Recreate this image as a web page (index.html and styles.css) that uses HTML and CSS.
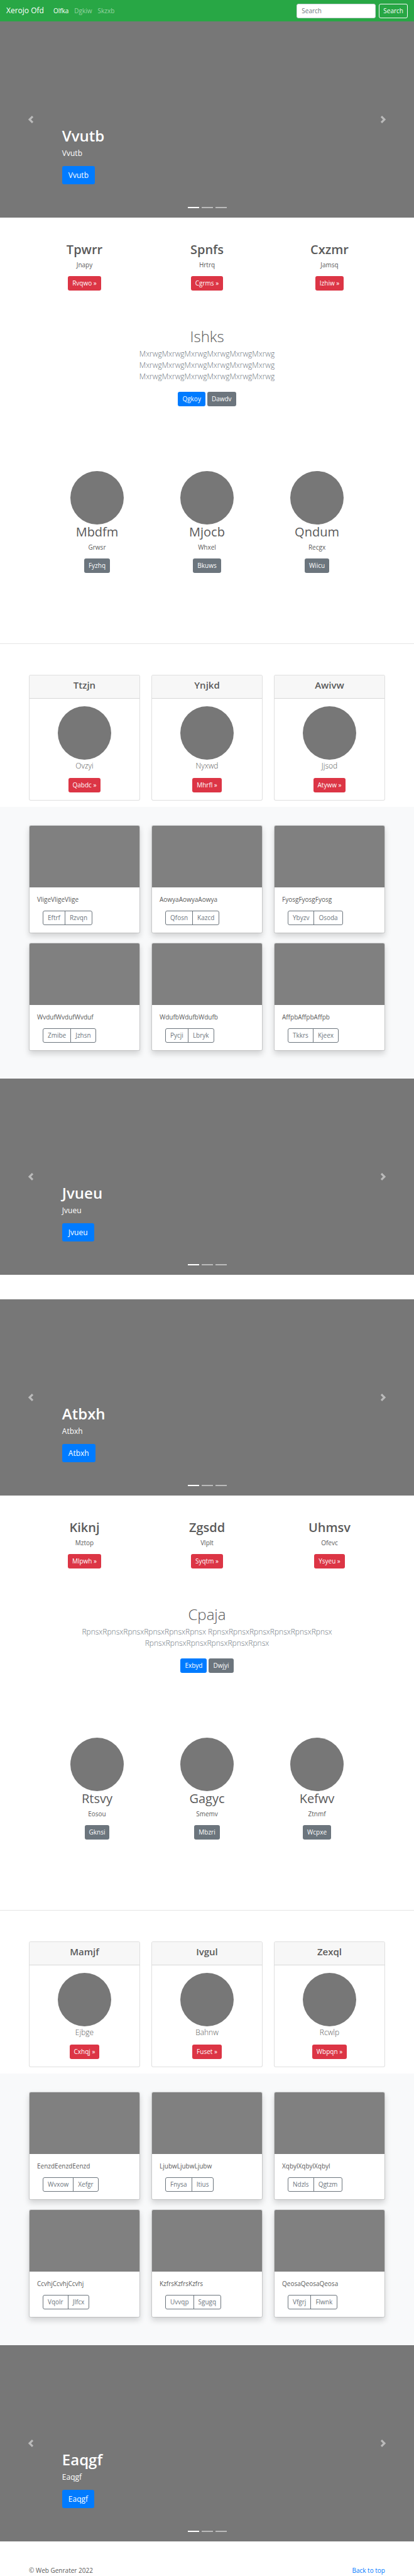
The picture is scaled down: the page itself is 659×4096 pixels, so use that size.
FILE: index.html
```html
<!DOCTYPE html>
<html lang="en">
<head>
<meta charset="utf-8">
<meta name="viewport" content="width=device-width, initial-scale=1">
<title>Xerojo Ofd</title>
<link rel="stylesheet" href="styles.css">
</head>
<body>
<header class="navbar">
  <a class="brand" href="#">Xerojo Ofd</a>
  <nav class="nav-links">
    <a class="nav-link active" href="#">Olfka</a>
    <a class="nav-link" href="#">Dgkiw</a>
    <a class="nav-link" href="#">Skzxb</a>
  </nav>
  <form class="search">
    <input class="search-input" type="text" placeholder="Search" aria-label="Search">
    <button class="btn btn-outline-light" type="button">Search</button>
  </form>
</header>
<main>

<section class="carousel">
  <div class="caption">
    <h1>Vvutb</h1>
    <p>Vvutb</p>
    <a class="btn btn-primary btn-lg" href="#">Vvutb</a>
  </div>
  <button class="control prev" type="button" aria-label="Previous"><svg viewBox="0 0 8 8"><path d="M5.25 0l-4 4 4 4 1.5-1.5L4.25 4l2.5-2.5L5.25 0z"/></svg></button>
  <button class="control next" type="button" aria-label="Next"><svg viewBox="0 0 8 8"><path d="M2.75 0l-1.5 1.5L3.75 4l-2.5 2.5L2.75 8l4-4-4-4z"/></svg></button>
  <div class="indicators"><span class="on"></span><span></span><span></span></div>
</section>

<section class="container columns features">
  <div class="column"><h2>Tpwrr</h2><p>Jnapy</p><a class="btn btn-danger" href="#">Rvqwo »</a></div>
  <div class="column"><h2>Spnfs</h2><p>Hrtrq</p><a class="btn btn-danger" href="#">Cgrms »</a></div>
  <div class="column"><h2>Cxzmr</h2><p>Jamsq</p><a class="btn btn-danger" href="#">Izhiw »</a></div>
</section>

<section class="intro">
  <h1>Ishks</h1>
  <p class="lead">MxrwgMxrwgMxrwgMxrwgMxrwgMxrwg MxrwgMxrwgMxrwgMxrwgMxrwgMxrwg MxrwgMxrwgMxrwgMxrwgMxrwgMxrwg</p>
  <div class="actions"><a class="btn btn-primary" href="#">Qgkoy</a><a class="btn btn-secondary" href="#">Dawdv</a></div>
</section>

<section class="team">
  <div class="column"><div class="avatar"></div><h2>Mbdfm</h2><p>Grwsr</p><a class="btn btn-secondary" href="#">Fyzhq</a></div>
  <div class="column"><div class="avatar"></div><h2>Mjocb</h2><p>Whxel</p><a class="btn btn-secondary" href="#">Bkuws</a></div>
  <div class="column"><div class="avatar"></div><h2>Qndum</h2><p>Recgx</p><a class="btn btn-secondary" href="#">Wiicu</a></div>
</section>

<hr class="divider">

<section class="container columns plans">
  <article class="card plan"><h4>Ttzjn</h4><div class="plan-body"><div class="avatar"></div><p>Ovzyi</p><a class="btn btn-danger" href="#">Qabdc »</a></div></article>
  <article class="card plan"><h4>Ynjkd</h4><div class="plan-body"><div class="avatar"></div><p>Nyxwd</p><a class="btn btn-danger" href="#">Mhrfl »</a></div></article>
  <article class="card plan"><h4>Awivw</h4><div class="plan-body"><div class="avatar"></div><p>Jjsod</p><a class="btn btn-danger" href="#">Atyww »</a></div></article>
</section>

<section class="album">
  <div class="container columns album-grid">
    <article class="card tile"><div class="thumb"></div><div class="tile-body"><p>VligeVligeVlige</p><div class="btn-group"><button type="button">Eftrf</button><button type="button">Rzvqn</button></div></div></article>
    <article class="card tile"><div class="thumb"></div><div class="tile-body"><p>AowyaAowyaAowya</p><div class="btn-group"><button type="button">Qfosn</button><button type="button">Kazcd</button></div></div></article>
    <article class="card tile"><div class="thumb"></div><div class="tile-body"><p>FyosgFyosgFyosg</p><div class="btn-group"><button type="button">Ybyzv</button><button type="button">Osoda</button></div></div></article>
    <article class="card tile"><div class="thumb"></div><div class="tile-body"><p>WvdufWvdufWvduf</p><div class="btn-group"><button type="button">Zmibe</button><button type="button">Jzhsn</button></div></div></article>
    <article class="card tile"><div class="thumb"></div><div class="tile-body"><p>WdufbWdufbWdufb</p><div class="btn-group"><button type="button">Pycji</button><button type="button">Lbryk</button></div></div></article>
    <article class="card tile"><div class="thumb"></div><div class="tile-body"><p>AffpbAffpbAffpb</p><div class="btn-group"><button type="button">Tkkrs</button><button type="button">Kjeex</button></div></div></article>
  </div>
</section>

<section class="carousel">
  <div class="caption">
    <h1>Jvueu</h1>
    <p>Jvueu</p>
    <a class="btn btn-primary btn-lg" href="#">Jvueu</a>
  </div>
  <button class="control prev" type="button" aria-label="Previous"><svg viewBox="0 0 8 8"><path d="M5.25 0l-4 4 4 4 1.5-1.5L4.25 4l2.5-2.5L5.25 0z"/></svg></button>
  <button class="control next" type="button" aria-label="Next"><svg viewBox="0 0 8 8"><path d="M2.75 0l-1.5 1.5L3.75 4l-2.5 2.5L2.75 8l4-4-4-4z"/></svg></button>
  <div class="indicators"><span class="on"></span><span></span><span></span></div>
</section>

<section class="carousel spaced">
  <div class="caption">
    <h1>Atbxh</h1>
    <p>Atbxh</p>
    <a class="btn btn-primary btn-lg" href="#">Atbxh</a>
  </div>
  <button class="control prev" type="button" aria-label="Previous"><svg viewBox="0 0 8 8"><path d="M5.25 0l-4 4 4 4 1.5-1.5L4.25 4l2.5-2.5L5.25 0z"/></svg></button>
  <button class="control next" type="button" aria-label="Next"><svg viewBox="0 0 8 8"><path d="M2.75 0l-1.5 1.5L3.75 4l-2.5 2.5L2.75 8l4-4-4-4z"/></svg></button>
  <div class="indicators"><span class="on"></span><span></span><span></span></div>
</section>

<section class="container columns features">
  <div class="column"><h2>Kiknj</h2><p>Mztop</p><a class="btn btn-danger" href="#">Mlpwh »</a></div>
  <div class="column"><h2>Zgsdd</h2><p>Vlplt</p><a class="btn btn-danger" href="#">Syqtm »</a></div>
  <div class="column"><h2>Uhmsv</h2><p>Ofevc</p><a class="btn btn-danger" href="#">Ysyeu »</a></div>
</section>

<section class="intro">
  <h1>Cpaja</h1>
  <p class="lead">RpnsxRpnsxRpnsxRpnsxRpnsxRpnsx RpnsxRpnsxRpnsxRpnsxRpnsxRpnsx RpnsxRpnsxRpnsxRpnsxRpnsxRpnsx</p>
  <div class="actions"><a class="btn btn-primary" href="#">Exbyd</a><a class="btn btn-secondary" href="#">Dwjyi</a></div>
</section>

<section class="team">
  <div class="column"><div class="avatar"></div><h2>Rtsvy</h2><p>Eosou</p><a class="btn btn-secondary" href="#">Gknsi</a></div>
  <div class="column"><div class="avatar"></div><h2>Gagyc</h2><p>Smemv</p><a class="btn btn-secondary" href="#">Mbzri</a></div>
  <div class="column"><div class="avatar"></div><h2>Kefwv</h2><p>Ztnmf</p><a class="btn btn-secondary" href="#">Wcpxe</a></div>
</section>

<hr class="divider">

<section class="container columns plans">
  <article class="card plan"><h4>Mamjf</h4><div class="plan-body"><div class="avatar"></div><p>Ejbge</p><a class="btn btn-danger" href="#">Cxhqj »</a></div></article>
  <article class="card plan"><h4>Ivgul</h4><div class="plan-body"><div class="avatar"></div><p>Bahnw</p><a class="btn btn-danger" href="#">Fuset »</a></div></article>
  <article class="card plan"><h4>Zexql</h4><div class="plan-body"><div class="avatar"></div><p>Rcwlp</p><a class="btn btn-danger" href="#">Wbpqn »</a></div></article>
</section>

<section class="album">
  <div class="container columns album-grid">
    <article class="card tile"><div class="thumb"></div><div class="tile-body"><p>EenzdEenzdEenzd</p><div class="btn-group"><button type="button">Wvxow</button><button type="button">Xefgr</button></div></div></article>
    <article class="card tile"><div class="thumb"></div><div class="tile-body"><p>LjubwLjubwLjubw</p><div class="btn-group"><button type="button">Fnysa</button><button type="button">Itius</button></div></div></article>
    <article class="card tile"><div class="thumb"></div><div class="tile-body"><p>XqbylXqbylXqbyl</p><div class="btn-group"><button type="button">Ndzls</button><button type="button">Qgtzm</button></div></div></article>
    <article class="card tile"><div class="thumb"></div><div class="tile-body"><p>CcvhjCcvhjCcvhj</p><div class="btn-group"><button type="button">Vqolr</button><button type="button">Jlfcx</button></div></div></article>
    <article class="card tile"><div class="thumb"></div><div class="tile-body"><p>KzfrsKzfrsKzfrs</p><div class="btn-group"><button type="button">Uvvqp</button><button type="button">Sgugq</button></div></div></article>
    <article class="card tile"><div class="thumb"></div><div class="tile-body"><p>QeosaQeosaQeosa</p><div class="btn-group"><button type="button">Vfgrj</button><button type="button">Flwnk</button></div></div></article>
  </div>
</section>

<section class="carousel">
  <div class="caption">
    <h1>Eaqgf</h1>
    <p>Eaqgf</p>
    <a class="btn btn-primary btn-lg" href="#">Eaqgf</a>
  </div>
  <button class="control prev" type="button" aria-label="Previous"><svg viewBox="0 0 8 8"><path d="M5.25 0l-4 4 4 4 1.5-1.5L4.25 4l2.5-2.5L5.25 0z"/></svg></button>
  <button class="control next" type="button" aria-label="Next"><svg viewBox="0 0 8 8"><path d="M2.75 0l-1.5 1.5L3.75 4l-2.5 2.5L2.75 8l4-4-4-4z"/></svg></button>
  <div class="indicators"><span class="on"></span><span></span><span></span></div>
</section>
</main>

<footer class="container footer">
  <span>© Web Genrater 2022</span>
  <a href="#">Back to top</a>
</footer>
</body>
</html>
```
FILE: styles.css
```css
* { box-sizing: border-box; }
body {
  margin: 0;
  background: #fff;
  color: #5a5a5a;
  font-family: "Open Sans", "Noto Sans", sans-serif;
  font-size: 10px;
  line-height: 15px;
}
h1, h2, h4, p { margin: 0; }
a { color: #007bff; text-decoration: none; }
button, input { font: inherit; }

/* Top bar */
.navbar {
  display: flex;
  align-items: center;
  height: 34px;
  padding: 0 10px;
  background: #28a745;
}
.brand { margin-right: 15px; color: #fff; font-size: 12px; line-height: 18px; }
.nav-links { display: flex; flex: 1; gap: 9px; }
.nav-link { color: rgba(255, 255, 255, .5); }
.nav-link.active { color: #fff; }
.search { display: flex; gap: 5px; }
.search-input {
  width: 126px;
  height: 23px;
  padding: 0 7px;
  border: 1px solid #ced4da;
  border-radius: 3px;
  color: #495057;
}
.search-input::placeholder { color: #6c757d; opacity: 1; }

/* Buttons */
.btn {
  display: inline-block;
  height: 23px;
  padding: 3px 6px;
  border: 1px solid transparent;
  border-radius: 3px;
  color: #fff;
  line-height: 15px;
  white-space: nowrap;
}
.btn-primary { background: #007bff; }
.btn-secondary { background: #6c757d; }
.btn-danger { background: #dc3545; }
.btn-outline-light { background: transparent; border-color: #f8f9fa; }
.btn-lg { height: 29px; padding: 4px 9px; font-size: 12px; line-height: 19px; }

/* Carousel */
.carousel {
  position: relative;
  display: flex;
  align-items: flex-end;
  height: 312px;
  padding: 0 15%;
  background: #777;
  color: #fff;
}
.carousel.spaced { margin-top: 39px; }
.caption { padding-bottom: 53px; }
.caption h1 { margin-bottom: 5px; font-size: 24px; font-weight: 600; line-height: 29px; }
.caption p { margin-bottom: 11px; font-size: 12px; line-height: 18px; }
.caption .btn { display: block; width: fit-content; }
.control {
  position: absolute;
  top: 0;
  bottom: 0;
  display: flex;
  align-items: center;
  justify-content: center;
  width: 15%;
  padding: 0;
  border: 0;
  background: none;
  opacity: .5;
}
.prev { left: 0; }
.next { right: 0; }
.control svg { width: 12px; height: 12px; fill: #fff; }
.indicators {
  position: absolute;
  right: 0;
  bottom: 15px;
  left: 0;
  display: flex;
  justify-content: center;
  gap: 4px;
}
.indicators span { width: 18px; height: 2px; background: #fff; opacity: .5; }
.indicators .on { opacity: 1; }

/* Shared columns */
.container { padding: 0 46px; }
.columns { display: grid; grid-template-columns: repeat(3, 1fr); gap: 15px 18px; }
.column { display: flex; flex-direction: column; align-items: center; }
.column h2 { margin-bottom: 5px; font-size: 20px; font-weight: 400; line-height: 24px; }
.column p { margin-bottom: 10px; }
.features { margin-top: 39px; }
.features h2 { font-weight: 600; }
.avatar { width: 85px; height: 85px; border-radius: 50%; background: #777; }

/* Intro */
.intro { max-width: 400px; margin: 58px auto 0; text-align: center; }
.intro h1 { margin-bottom: 5px; font-size: 24px; font-weight: 300; line-height: 29px; }
.lead { color: #6c757d; font-size: 12px; font-weight: 300; line-height: 18px; }
.actions { display: flex; justify-content: center; gap: 3px; margin-top: 15px; }

.team { display: grid; grid-template-columns: repeat(3, 1fr); margin-top: 103px; padding: 0 67px; }
.divider { margin: 112px 0 49px; border: 0; border-top: 1px solid rgba(0, 0, 0, .1); }

/* Cards */
.card { overflow: hidden; border: 1px solid rgba(0, 0, 0, .125); border-radius: 3px; background: #fff; background-clip: padding-box; }
.plan h4 {
  padding: 6px 12px 12px;
  border-bottom: 1px solid rgba(0, 0, 0, .125);
  background: #f7f7f7;
  font-size: 15px;
  font-weight: 600;
  line-height: 18px;
  text-align: center;
}
.plan-body { display: flex; flex-direction: column; align-items: center; padding: 12px; }
.plan-body p { margin: 1px 0 10px; font-size: 12px; font-weight: 300; line-height: 18px; }

.album { margin-top: 10px; padding: 29px 0 44px; background: #f8f9fa; }
.tile { box-shadow: 0 5px 10px rgba(0, 0, 0, .15); }
.thumb { height: 98px; background: #808080; }
.tile-body { padding: 12px; }
.tile-body p { margin-bottom: 10px; }
.btn-group { display: flex; width: fit-content; margin-left: 9px; border: 1px solid #6c757d; border-radius: 3px; }
.btn-group button { height: 21px; padding: 0 7px; border: 0; background: none; color: #6c757d; }
.btn-group button + button { border-left: 1px solid #6c757d; }

.footer { display: flex; justify-content: space-between; padding-top: 39px; }
```
